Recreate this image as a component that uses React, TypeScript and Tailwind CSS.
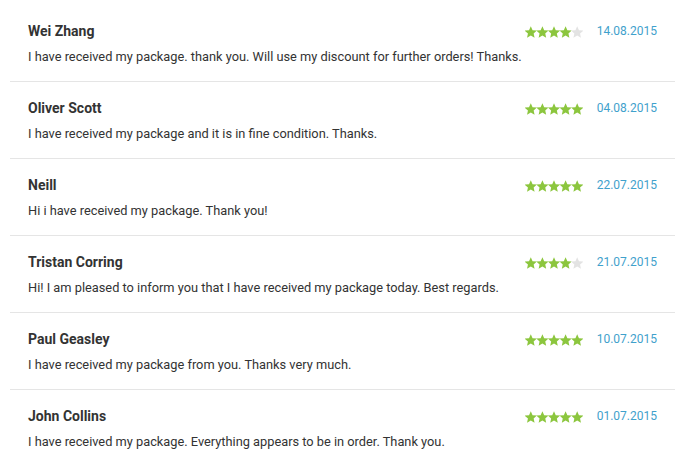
import React from "react";

const reviews = [
  { name: "Wei Zhang", text: "I have received my package. thank you. Will use my discount for further orders! Thanks.", rating: 4, date: "14.08.2015" },
  { name: "Oliver Scott", text: "I have received my package and it is in fine condition. Thanks.", rating: 5, date: "04.08.2015" },
  { name: "Neill", text: "Hi i have received my package. Thank you!", rating: 5, date: "22.07.2015" },
  { name: "Tristan Corring", text: "Hi! I am pleased to inform you that I have received my package today. Best regards.", rating: 4, date: "21.07.2015" },
  { name: "Paul Geasley", text: "I have received my package from you. Thanks very much.", rating: 5, date: "10.07.2015" },
  { name: "John Collins", text: "I have received my package. Everything appears to be in order. Thank you.", rating: 5, date: "01.07.2015" },
];

function starPoints(cx: number, cy: number, R: number, r: number) {
  const pts: string[] = [];
  for (let i = 0; i < 10; i++) {
    const rad = i % 2 === 0 ? R : r;
    const a = -Math.PI / 2 + (i * Math.PI) / 5;
    pts.push(`${(cx + rad * Math.cos(a)).toFixed(2)},${(cy + rad * Math.sin(a)).toFixed(2)}`);
  }
  return pts.join(" ");
}

function Stars({ rating }: { rating: number }) {
  return (
    <svg width="58" height="12" viewBox="0 0 58 12" className="mt-[1px]">
      {[0, 1, 2, 3, 4].map((i) => (
        <polygon
          key={i}
          points={starPoints(5.8 + i * 11.6, 6.6, 6.4, 3.0)}
          fill={i < rating ? "#8cc63e" : "#e3e3e3"}
        />
      ))}
    </svg>
  );
}

export default function App() {
  return (
    <div className="bg-white w-[688px] h-[457px] pt-[5px] pl-[10px] overflow-hidden" style={{ fontFamily: "Roboto, 'Liberation Sans', sans-serif" }}>
      <div className="w-[665px]">
        {reviews.map((r, idx) => (
          <div key={idx} className="border-b border-[#e5e5e5] pt-[16px] pb-[14px] pl-[18px] pr-[18px]">
            <div className="flex items-center h-[20px]">
              <div className="font-bold text-[14px] text-[#333333] flex-1">{r.name}</div>
              <Stars rating={r.rating} />
              <div className="ml-[14px] text-[12px] text-[#3fa1cc]">{r.date}</div>
            </div>
            <div className="mt-[6px] h-[20px] leading-[20px] text-[12.8px] text-[#333333]">{r.text}</div>
          </div>
        ))}
      </div>
    </div>
  );
}
